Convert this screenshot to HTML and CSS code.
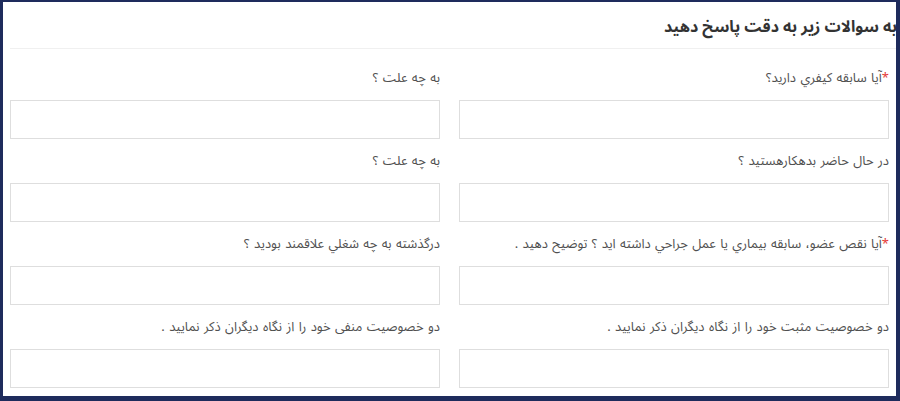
FILE: index.html
```html
<!DOCTYPE html>
<html lang="fa" dir="rtl">
<head>
<meta charset="utf-8">
<link rel="stylesheet" href="styles.css">
</head>
<body>
<div class="panel">
  <h2 class="title">به سوالات زير به دقت پاسخ دهيد</h2>
  <div class="form">
    <div class="field">
      <label class="label"><span class="req">*</span>آيا سابقه كيفري داريد؟</label>
      <div class="input"></div>
    </div>
    <div class="field">
      <label class="label">به چه علت ؟</label>
      <div class="input"></div>
    </div>
    <div class="field">
      <label class="label">در حال حاضر بدهكارهستيد ؟</label>
      <div class="input"></div>
    </div>
    <div class="field">
      <label class="label">به چه علت ؟</label>
      <div class="input"></div>
    </div>
    <div class="field">
      <label class="label"><span class="req">*</span>آيا نقص عضو، سابقه بيماري يا عمل جراحي داشته ايد ؟ توضيح دهيد .</label>
      <div class="input"></div>
    </div>
    <div class="field">
      <label class="label">درگذشته به چه شغلي علاقمند بوديد ؟</label>
      <div class="input"></div>
    </div>
    <div class="field">
      <label class="label">دو خصوصيت مثبت خود را از نگاه ديگران ذكر نماييد .</label>
      <div class="input"></div>
    </div>
    <div class="field">
      <label class="label">دو خصوصيت منفى خود را از نگاه ديگران ذكر نماييد .</label>
      <div class="input"></div>
    </div>
  </div>
</div>
</body>
</html>
```

FILE: styles.css
```css
html, body {
  margin: 0;
  padding: 0;
}
body {
  background: #1e2b5c;
  width: 900px;
  height: 401px;
  box-sizing: border-box;
  padding: 2px 4px 5px 3px;
  font-family: "Noto Sans Arabic", "DejaVu Sans", sans-serif;
  overflow: hidden;
}
.panel {
  background: #ffffff;
  height: 394px;
  overflow: hidden;
  display: flex;
  flex-direction: column;
}
.title {
  margin: 0 -1px 0 7px;
  padding: 0;
  height: 46px;
  line-height: 50px;
  font-size: 16px;
  font-weight: bold;
  color: #333;
  border-bottom: 1px solid #f0f0f0;
}
.form {
  display: grid;
  grid-template-columns: 430px 430px;
  column-gap: 19px;
  row-gap: 13px;
  padding: 20px 7px 0 7px;
}
.field {
  display: flex;
  flex-direction: column;
  gap: 13px;
}
.label {
  height: 18px;
  line-height: 18px;
  font-size: 13px;
  word-spacing: 1px;
  color: #505050;
  white-space: nowrap;
}
.req {
  color: #e53935;
}
.input {
  height: 37px;
  border: 1px solid #dedede;
  background: #fff;
}
```
